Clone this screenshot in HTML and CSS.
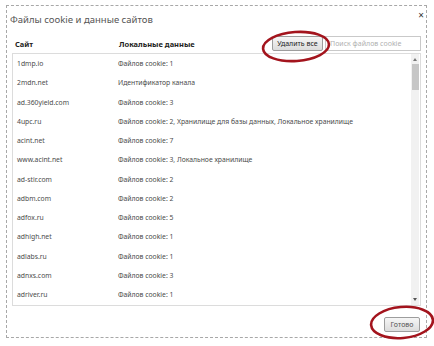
FILE: index.html
```html
<!DOCTYPE html>
<html lang="ru">
<head>
<meta charset="utf-8">
<link rel="stylesheet" href="styles.css">
</head>
<body>
<div class="dialog">
  <div class="titlebar">
    <span class="title">Файлы cookie и данные сайтов</span>
    <span class="close">×</span>
  </div>
  <div class="toolbar">
    <span class="col-site head">Сайт</span>
    <span class="col-data head">Локальные данные</span>
    <button class="btn">Удалить все</button>
    <input class="search" type="text" placeholder="Поиск файлов cookie">
  </div>
  <div class="table">
    <div class="rows">
      <div class="row"><span class="site">1dmp.io</span><span class="data">Файлов cookie: 1</span></div>
      <div class="row"><span class="site">2mdn.net</span><span class="data">Идентификатор канала</span></div>
      <div class="row"><span class="site">ad.360yield.com</span><span class="data">Файлов cookie: 3</span></div>
      <div class="row"><span class="site">4upc.ru</span><span class="data">Файлов cookie: 2, Хранилище для базы данных, Локальное хранилище</span></div>
      <div class="row"><span class="site">acint.net</span><span class="data">Файлов cookie: 7</span></div>
      <div class="row"><span class="site">www.acint.net</span><span class="data">Файлов cookie: 3, Локальное хранилище</span></div>
      <div class="row"><span class="site">ad-stir.com</span><span class="data">Файлов cookie: 2</span></div>
      <div class="row"><span class="site">adbm.com</span><span class="data">Файлов cookie: 2</span></div>
      <div class="row"><span class="site">adfox.ru</span><span class="data">Файлов cookie: 5</span></div>
      <div class="row"><span class="site">adhigh.net</span><span class="data">Файлов cookie: 1</span></div>
      <div class="row"><span class="site">adlabs.ru</span><span class="data">Файлов cookie: 1</span></div>
      <div class="row"><span class="site">adnxs.com</span><span class="data">Файлов cookie: 3</span></div>
      <div class="row"><span class="site">adriver.ru</span><span class="data">Файлов cookie: 1</span></div>
    </div>
    <div class="scrollbar">
      <span class="arrow up"></span>
      <span class="thumb"></span>
      <span class="track"></span>
      <span class="arrow down"></span>
    </div>
  </div>
  <div class="footer">
    <button class="btn done">Готово</button>
  </div>
</div>
<svg class="marks" width="434" height="346" viewBox="0 0 434 346">
  <ellipse cx="296" cy="46.5" rx="33" ry="14.5" transform="rotate(-4 296 46.5)" fill="none" stroke="#a3141d" stroke-width="2.6"/>
  <ellipse cx="402" cy="322.5" rx="31" ry="15.5" transform="rotate(-5 402 322.5)" fill="none" stroke="#a3141d" stroke-width="2.6"/>
</svg>
</body>
</html>
```

FILE: styles.css
```css
html, body {
  margin: 0;
  padding: 0;
  background: #ffffff;
}
body {
  width: 434px;
  height: 346px;
  padding: 5px 0 0 6px;
  box-sizing: border-box;
  font-family: "Noto Sans", "Open Sans", sans-serif;
  color: #444;
  position: relative;
  overflow: hidden;
}
.dialog {
  width: 421px;
  height: 333px;
  box-sizing: border-box;
  border: 1px dashed #a8a8a8;
  display: flex;
  flex-direction: column;
  background: #fff;
}
.titlebar {
  display: flex;
  justify-content: space-between;
  align-items: flex-start;
  padding: 7px 2px 0 3px;
  height: 13px;
}
.title {
  font-size: 9.5px;
  line-height: 13px;
  color: #555;
}
.close {
  font-size: 10px;
  line-height: 9px;
  margin-top: -2px;
  color: #333;
}
.toolbar {
  display: flex;
  align-items: center;
  height: 15px;
  margin-top: 10px;
  padding: 0 5px 0 8px;
}
.head {
  font-size: 7.5px;
  font-weight: bold;
  color: #222;
}
.col-site {
  width: 104px;
}
.col-data {
  flex: 1;
}
.btn {
  font-family: inherit;
  font-size: 7px;
  color: #222;
  height: 15px;
  padding: 0;
  border: 1px solid #9d9d9d;
  border-radius: 2px;
  background: linear-gradient(#f6f6f6, #dcdcdc);
  line-height: 13px;
  white-space: nowrap;
}
.toolbar .btn {
  width: 51px;
}
.search {
  width: 96px;
  height: 15px;
  box-sizing: border-box;
  margin-left: 2px;
  border: 1px solid #c9c9c9;
  padding: 0 4px;
  font-family: inherit;
  font-size: 7px;
  color: #aaa;
}
.search::placeholder {
  color: #b0b0b0;
}
.table {
  margin: 2px 5px 0 5px;
  height: 251px;
  border: 1px solid #dcdcdc;
  display: flex;
}
.rows {
  flex: 1;
}
.row {
  display: flex;
  align-items: center;
  height: 19.25px;
  font-size: 6.8px;
  color: #4a4a4a;
  white-space: nowrap;
}
.site {
  width: 101px;
  padding-left: 4px;
}
.data {
  flex: 1;
}
.scrollbar {
  width: 8px;
  margin-right: 1px;
  background: #f1f1f1;
  display: flex;
  flex-direction: column;
  align-items: center;
}
.arrow {
  width: 0;
  height: 0;
  border-left: 2px solid transparent;
  border-right: 2px solid transparent;
}
.arrow.up {
  margin: 4px 0 3px;
  border-bottom: 3px solid #777;
}
.arrow.down {
  margin: 3px 0 4px;
  border-top: 3px solid #555;
}
.thumb {
  width: 7px;
  height: 26px;
  background: #c6c6c6;
}
.track {
  flex: 1;
}
.footer {
  display: flex;
  justify-content: flex-end;
  margin-top: 11px;
  padding-right: 6px;
}
.btn.done {
  width: 36px;
  color: #555;
}
.marks {
  position: absolute;
  left: 0;
  top: 0;
  pointer-events: none;
}
```
